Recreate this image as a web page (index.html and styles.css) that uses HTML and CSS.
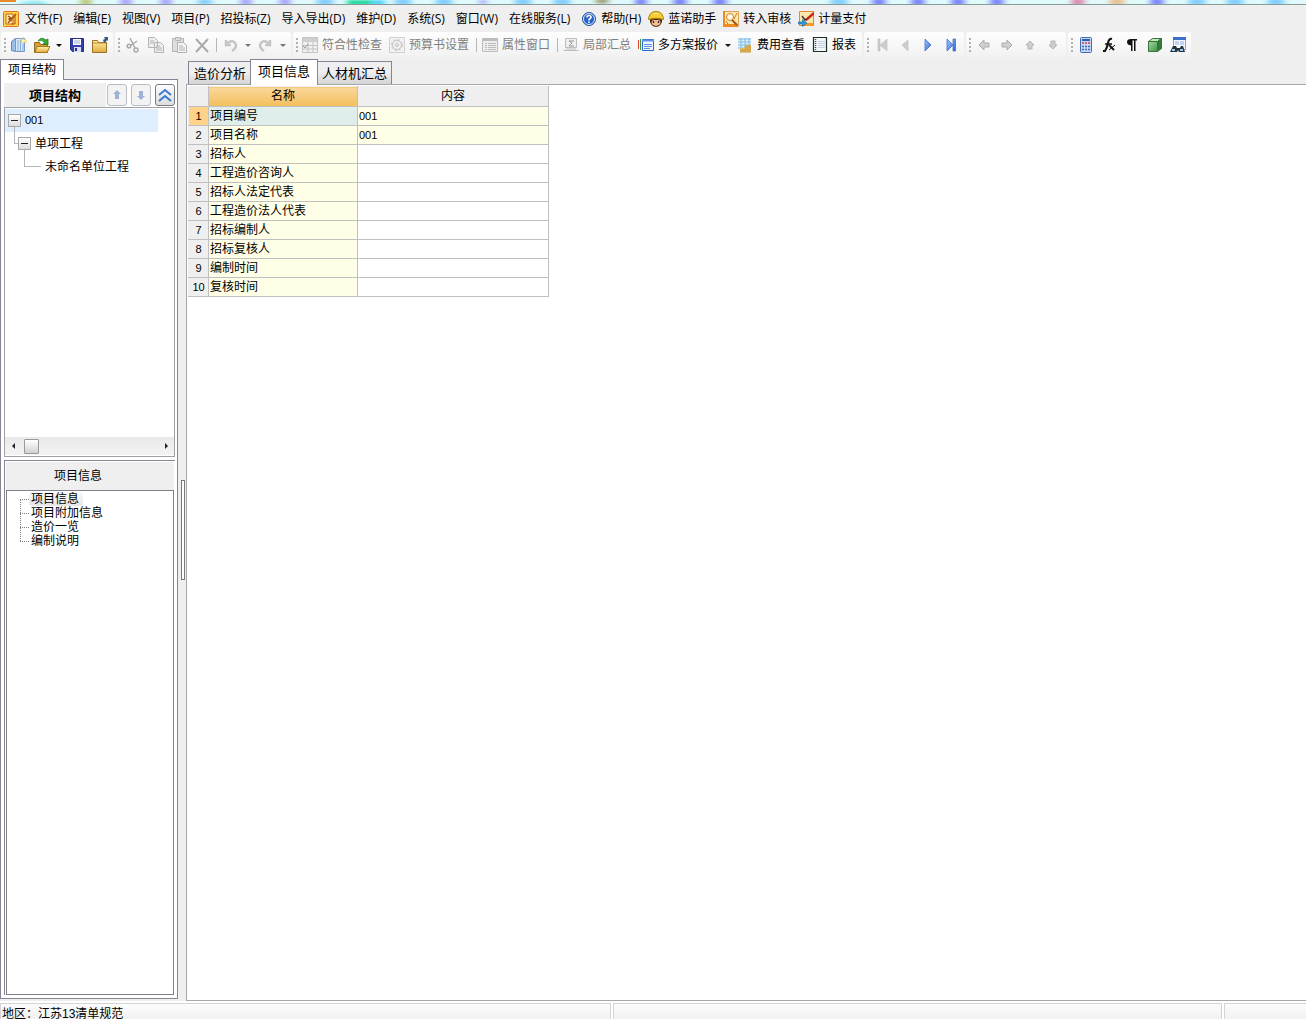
FILE: index.html
```html
<!DOCTYPE html>
<html lang="zh-CN">
<head>
<meta charset="utf-8">
<title>项目信息</title>
<link rel="stylesheet" href="styles.css">
</head>
<body>
<svg class="defs" aria-hidden="true">
  <defs>
    <linearGradient id="gold" x1="0" y1="0" x2="0" y2="1"><stop offset="0" stop-color="#fff3a8"/><stop offset="1" stop-color="#e0a93c"/></linearGradient>
    <linearGradient id="blue" x1="0" y1="0" x2="1" y2="1"><stop offset="0" stop-color="#a9cbfa"/><stop offset="1" stop-color="#2a62cf"/></linearGradient>
    <linearGradient id="green" x1="0" y1="0" x2="1" y2="1"><stop offset="0" stop-color="#a4dba0"/><stop offset="1" stop-color="#3f9145"/></linearGradient>
    <filter id="soft" x="-50%" y="-50%" width="200%" height="200%"><feGaussianBlur stdDeviation="3 1"/></filter>
    <symbol id="arrow-left" viewBox="0 0 16 16"><path d="M3 8 8 3v3h5v4H8v3z" fill="#cfcfcf" stroke="#ababab"/></symbol>
    <symbol id="arrow-up" viewBox="0 0 16 16"><path d="M8 4 12 8H10v4H6V8H4z" fill="#cfcfcf" stroke="#b4b4b4"/></symbol>
  </defs>
</svg>

<div class="titlebar">
  <svg width="1306" height="5" aria-hidden="true">
    <g filter="url(#soft)">
      <g fill="#8ee9ee"><ellipse cx="34" cy="4" rx="14" ry="3"/></g>
      <g fill="#bccb7c"><ellipse cx="86" cy="2" rx="6" ry="4"/></g>
      <g fill="#a9a5fb"><ellipse cx="126" cy="2" rx="6" ry="4"/><ellipse cx="166" cy="2" rx="6" ry="4"/><ellipse cx="246" cy="2" rx="6" ry="4"/><ellipse cx="285" cy="2" rx="6" ry="4"/><ellipse cx="483" cy="2" rx="4" ry="2"/></g>
      <g fill="#86d0fb"><ellipse cx="205" cy="2" rx="8" ry="3"/><ellipse cx="325" cy="2" rx="9" ry="4"/><ellipse cx="403" cy="2" rx="9" ry="4"/><ellipse cx="444" cy="2" rx="9" ry="4"/><ellipse cx="523" cy="2" rx="9" ry="4"/><ellipse cx="562" cy="2" rx="9" ry="4"/><ellipse cx="839" cy="2" rx="9" ry="4"/><ellipse cx="1197" cy="2" rx="9" ry="4"/><ellipse cx="1235" cy="2" rx="9" ry="4"/><ellipse cx="1276" cy="2" rx="9" ry="4"/></g>
      <path d="M347 0h24v5h-24z" fill="#28dca0"/><path d="M371 0h14v5h-14z" fill="#55d6f8"/>
      <g fill="#a2a47c"><ellipse cx="602" cy="1" rx="7" ry="3"/></g>
      <g fill="#7d84fb"><ellipse cx="641" cy="2" rx="6" ry="4"/><ellipse cx="680" cy="2" rx="7" ry="4"/><ellipse cx="720" cy="2" rx="7" ry="4"/><ellipse cx="879" cy="2" rx="7" ry="4"/><ellipse cx="918" cy="2" rx="7" ry="4"/><ellipse cx="958" cy="2" rx="7" ry="4"/><ellipse cx="997" cy="2" rx="7" ry="4"/><ellipse cx="1157" cy="2" rx="7" ry="4"/></g>
      <ellipse cx="1078" cy="2" rx="7" ry="4" fill="#dd8fb4"/><ellipse cx="1117" cy="2" rx="8" ry="4" fill="#eac294"/>
    </g>
    <path d="M0 0h16v2H0z" fill="#e78a2c"/>
  </svg>
</div>

<nav class="menubar" aria-label="菜单">
  <svg class="icon" viewBox="0 0 16 16" aria-hidden="true"><rect x=".5" y=".5" width="15" height="15" rx="1" fill="#ffd14d" stroke="#d9771c"/><path d="M3 3h7v10H3z" fill="#fff0b8" stroke="#c8690f"/><path d="M5 5l3 2-2 1 3 2M5 12 13 3" stroke="#a85410" stroke-width="1.5" fill="none"/><path d="M12 5v8H8" stroke="#a85410" fill="none"/></svg>
  <button>文件(F)</button><button>编辑(E)</button><button>视图(V)</button><button>项目(P)</button><button>招投标(Z)</button><button>导入导出(D)</button><button>维护(D)</button><button>系统(S)</button><button>窗口(W)</button><button>在线服务(L)</button>
  <button class="with-icon"><svg class="icon" viewBox="0 0 16 16"><circle cx="8" cy="8" r="6.5" fill="#2462c9" stroke="#2a5299"/><circle cx="8" cy="8" r="5.5" fill="none" stroke="#dceaff"/><path d="M6 6.500q0-2 2-2t2 1.800q0 1.200-2 2.200v1" fill="none" stroke="#fff" stroke-width="1.600"/><path d="M7.200 10.500h1.600v1.500H7.200z" fill="#fff"/></svg>帮助(H)</button>
  <button class="with-icon"><svg class="icon" viewBox="0 0 16 16"><path d="M3 8h10v4q-1 3.500-5 3.500t-5-3.500z" fill="#f2b98c" stroke="#4c2b14"/><path d="M2 7v5l3-3h6l3 3V7z" fill="#4c2b14"/><path d="M.5 8.500Q1 .500 8 .500t7.500 8Q8 6 .5 8.500z" fill="#f5cd35" stroke="#a98210"/><path d="M6 3q2-1 4 0" stroke="#fff2a0" fill="none"/><path d="M5.500 10v2m5-2v2" stroke="#222" stroke-width="1.200"/></svg>蓝诺助手</button>
  <button class="with-icon"><svg class="icon" viewBox="0 0 16 16"><path d="M.5.500h15v15H.500z" fill="#ffe8a9" stroke="#dfa25c"/><path d="M0 0h2v16H0zM1 13h14v3H1z" fill="#ee8c22"/><circle cx="7" cy="6" r="3.500" fill="#fffbe9" stroke="#c77c2a"/><path d="m9 9 5 5" stroke="#9e5517" stroke-width="2"/><path d="M14 2 11 8M3 10l2 3" stroke="#d47427"/></svg>转入审核</button>
  <button class="with-icon"><svg class="icon" viewBox="0 0 16 16"><path d="M1.500.500h14v14h-14z" fill="#ffe6ae" stroke="#dc8a38"/><path d="M7 12h8v3H7z" fill="#f19a27"/><path d="M16 2 8 9" stroke="#c92d18" stroke-width="2.500"/><path d="m4 5 3 4 2-1" stroke="#4b302a" stroke-width="1.500" fill="none"/><path d="M.5 11h4V8.500L9 12l-4.500 3.500V13H.500z" fill="#2a9be4" stroke="#1266a9" stroke-width=".6"/></svg>计量支付</button>
</nav>

<div class="toolbars" role="toolbar" aria-label="工具栏">
  <div class="group">
    <button aria-label="新建"><svg class="icon" viewBox="0 0 16 16"><path d="m.5 4.500 4-3v13l-4-1z" fill="#9bbfe6" stroke="#5f87bb"/><path d="M4.500 1.500h9v13h-9z" fill="#d7e9fb" stroke="#7799c5"/><path d="M7 3v11M9.500 3v11M12 7v7" stroke="#7fabdc"/><path d="M12.500 0v8M8.500 4h8M10 1.500l5 5m0-5-5 5" stroke="#f3c63b"/><circle cx="12.500" cy="4" r="1.500" fill="#fff6c0"/></svg></button>
    <button aria-label="打开"><svg class="icon" viewBox="0 0 16 16"><path d="M.5 5.500h5l1 2h7v8H.500z" fill="#d6a138" stroke="#94681b"/><path d="M3 9.500h13l-3 6H1z" fill="url(#gold)" stroke="#a47720"/><path d="M4 4Q7-1 12 3l2-1v6l-5-1 1.500-1.500Q8 2 4 4z" fill="#39a935" stroke="#157a20" stroke-width=".7"/></svg></button>
    <button class="drop" aria-label="打开选项"></button>
    <button aria-label="保存"><svg class="icon" viewBox="0 0 16 16"><path d="M1.500 1.500h13v13h-11l-2-2z" fill="#3540ad" stroke="#252e83"/><path d="M4 2h8v6H4z" fill="#fff"/><path d="M5 4h6M5 6h6" stroke="#9daed2"/><path d="M5 10h7v5H5z" fill="#dce0ee"/><path d="M6 11h2v3H6z" fill="#252e83"/></svg></button>
    <button aria-label="文件夹"><svg class="icon" viewBox="0 0 16 16"><path d="M.5 3.500h5l1 2h8v10H.500z" fill="url(#gold)" stroke="#9b7229"/><path d="M1 6h13" stroke="#b78b35"/><path d="M11 4q0-2 2-2l-1-2h4v4l-1-1-2 3z" fill="#3c597d"/></svg></button>
  </div>
  <div class="group muted">
    <button aria-label="剪切"><svg class="icon" viewBox="0 0 16 16" fill="none" stroke="#aaa" stroke-width="1.500"><path d="m5 1 5 10M12 4 5 9"/><circle cx="4" cy="9" r="1.800"/><circle cx="11" cy="13" r="2"/></svg></button>
    <button aria-label="复制"><svg class="icon" viewBox="0 0 16 16" fill="#eee" stroke="#b5b5b5"><path d="M.500.500h6l3 3v7h-9zM6.500 5.500h6l3 3v7h-9z"/><path d="M2 4h4M2 6h4M8 9h4m-4 2h6m-6 2h6"/></svg></button>
    <button aria-label="粘贴"><svg class="icon" viewBox="0 0 16 16" fill="#ddd" stroke="#b3b3b3"><path d="M1.500 1.500h11v13h-11z"/><path d="M4.500.500h5v3h-5z"/><path d="M6.500 5.500h6l3 3v7h-9z" fill="#f3f3f3"/><path d="M8 9h4m-4 2h6m-6 2h6"/></svg></button>
    <button aria-label="删除"><svg class="icon" viewBox="0 0 16 16" fill="none" stroke="#aaa" stroke-width="2"><path d="m2 2 12 13M14 2 2 15"/></svg></button>
    <span class="sep"></span>
    <button aria-label="撤销"><svg class="icon" viewBox="0 0 16 16" fill="none" stroke="#c5c5c5" stroke-width="2.500"><path d="M3 7q6-5 9-1t-3 8"/><path d="M3 3v5h5"/></svg></button>
    <button class="drop" aria-label="撤销选项"></button>
    <button aria-label="重做"><svg class="icon" viewBox="0 0 16 16" fill="none" stroke="#c5c5c5" stroke-width="2.500"><path d="M12 7q-6-5-9-1t3 8"/><path d="M12 3v5H7"/></svg></button>
    <button class="drop" aria-label="重做选项"></button>
  </div>
  <div class="group spaced">
    <button class="muted"><svg class="icon" viewBox="0 0 16 16" stroke="#c3c3c3"><path d="M.5.500h15v15H.500z" fill="#f2f2f2"/><path d="M1 1h14v4H1z" fill="#cfcfcf" stroke="none"/><path d="M1 8.500h14M1 12h14M6 5v10m5-10v10"/><path d="m1 9 2 2 3-4" stroke="#999" fill="none"/></svg>符合性检查</button>
    <button class="muted"><svg class="icon" viewBox="0 0 16 16" stroke="#c2c2c2" fill="none"><path d="M.5.500h15v15H.500z" fill="#f2f2f2" stroke="#d0d0d0"/><circle cx="8" cy="8" r="5.500" stroke-dasharray="2.300 2"/><circle cx="8" cy="8" r="4.500"/><circle cx="8" cy="8" r="1.500"/></svg>预算书设置</button>
    <span class="sep"></span>
    <button class="muted"><svg class="icon" viewBox="0 0 16 16" stroke="#bcbcbc" fill="none"><path d="M.5 1.500h15v13H.500z" fill="#eee"/><path d="M1 3h14" stroke-width="2"/><path d="M3 6.500h2m1 0h8m-11 2h2m1 0h8m-11 2h2m1 0h8m-11 2h2m1 0h8"/></svg>属性窗口</button>
    <span class="sep"></span>
    <button class="muted"><svg class="icon" viewBox="0 0 16 16" stroke="#bdbdbd" fill="none"><path d="M2.500 1.500h11v9h-11z" fill="#eee"/><path d="M.5 13.500h15M3 12h10"/><path d="M11 4H6l3 2-3 3h5" stroke="#999"/></svg>局部汇总</button>
    <button><svg class="icon" viewBox="0 0 16 16" fill="none"><path d="M.5 3v9" stroke="#d9432f"/><path d="M2.500 2v11" stroke="#3a9a45"/><path d="M4.500 2.500h11v11h-11z" fill="#edf5ff" stroke="#2a67cc"/><path d="M4 3.500h12" stroke="#5d92e6" stroke-width="2"/><path d="M6 7.500h8M6 9.500h8m-8 2h6" stroke="#5e91dc"/></svg>多方案报价</button>
    <button class="drop" aria-label="多方案报价选项"></button>
    <button><svg class="icon" viewBox="0 0 16 16" fill="none"><path d="M1 1h13v11H1z" fill="#d9effb"/><path d="M1 2h13M1 5h13M1 8h13M1 11h12M4 1v11m4-11v11m4-11v11" stroke="#85bce1"/><path d="M8 8h6v7H8zM3 11h6v4H3z" fill="#e8bd5b"/><path d="M8 9h6m-6 2h6m-6 2h6m-11 0h6m-6 2h11" stroke="#c29542"/></svg>费用查看</button>
    <button><svg class="icon" viewBox="0 0 16 16" fill="none"><path d="M1.500.500h13v14h-13z" fill="#f3f8ff" stroke="#17331f" stroke-width="1.200"/><path d="M3.500 2v12" stroke="#444" stroke-dasharray="1 1" stroke-width="1.500"/><path d="M6 4.500h7M6 6.500h7M6 8.500h7m-7 2h7" stroke="#c5cedd"/></svg>报表</button>
  </div>
  <div class="group">
    <button aria-label="首条"><svg class="icon" viewBox="0 0 16 16"><path d="M4 2v12H6V2zM13 2v12L6 8z" fill="#ccc" stroke="#bdbdbd" stroke-width=".6"/></svg></button>
    <button aria-label="上一条"><svg class="icon" viewBox="0 0 16 16"><path d="M11 3v11L5 8z" fill="#ccc" stroke="#bdbdbd" stroke-width=".6"/></svg></button>
    <button aria-label="下一条"><svg class="icon" viewBox="0 0 16 16"><path d="M5 2v12l6-6z" fill="url(#blue)" stroke="#3c72d3" stroke-width=".8"/></svg></button>
    <button aria-label="末条"><svg class="icon" viewBox="0 0 16 16"><path d="M4 2v12l6-6zM10 2h2.500v12H10z" fill="url(#blue)" stroke="#3c72d3" stroke-width=".8"/></svg></button>
  </div>
  <div class="group">
    <button aria-label="左移"><svg class="icon"><use href="#arrow-left"/></svg></button>
    <button aria-label="右移"><svg class="icon flip"><use href="#arrow-left"/></svg></button>
    <button aria-label="上移"><svg class="icon"><use href="#arrow-up"/></svg></button>
    <button aria-label="下移"><svg class="icon turn"><use href="#arrow-up"/></svg></button>
  </div>
  <div class="group">
    <button aria-label="计算器"><svg class="icon" viewBox="0 0 16 16"><rect x="2.500" y=".5" width="11" height="15" rx="1" fill="#c4d8f6" stroke="#426bac"/><path d="M4 2h8v2H4z" fill="#315fae"/><path d="M4 6h2m1 0h2m1 0h2" stroke="#d2404a" stroke-width="1.500"/><path d="M4 9.500h2m1 0h2m1 0h2m-8 3h2m1 0h2m1 0h2" stroke="#416dba" stroke-width="1.500"/></svg></button>
    <button aria-label="公式"><svg class="icon" viewBox="0 0 16 16" fill="none" stroke="#111"><path d="M11 2Q8 1 7 6t-3 8H2" stroke-width="2"/><path d="M4 7h7" stroke-width="1.500"/><path d="m8 8 5 5" stroke-width="2"/><path d="m14 8-6 5"/></svg></button>
    <button aria-label="段落"><svg class="icon" viewBox="0 0 16 16"><path d="M13 2H7Q3 2 3 5t4 3.500V14h1.500V3.500H10V14h1.500V3.500H13z" fill="#111"/></svg></button>
    <button aria-label="模型"><svg class="icon" viewBox="0 0 16 16" stroke="#35743a"><path d="M1.500 4.500h9v10h-9z" fill="url(#green)"/><path d="m1.500 4.500 4-3h9l-4 3z" fill="#c2e8b9"/><path d="m10.500 4.500 4-3v10l-4 3z" fill="#34783a"/></svg></button>
    <button aria-label="查找"><svg class="icon" viewBox="0 0 16 16"><path d="M3.500.500h12v12h-12z" fill="#f1f6ff" stroke="#85a3d2"/><path d="M3 1.500h13" stroke="#3d70c9" stroke-width="3"/><path d="M5 5h4m1 0h4M5 7h4m1 0h4" stroke="#93b1dc"/><path d="M3 9h3l1 2h3l1-2h2l2 6H9l-1-2-1 2H0z" fill="#26313e"/><path d="M2 12h3v2H2zM10 12h3v2h-3z" fill="#9ad0ed"/></svg></button>
  </div>
</div>

<div class="workspace">
  <aside class="sidebar">
    <div class="tabs"><button class="side-tab">项目结构</button></div>
    <div class="side-body">
      <section class="structure">
        <header class="structure-head">
          <h2>项目结构</h2>
          <button class="square dim" aria-label="上移"><svg viewBox="0 0 16 16"><path d="m8 3 4 4h-2v5H6V7H4z" fill="#9fb3d6"/></svg></button>
          <button class="square dim" aria-label="下移"><svg viewBox="0 0 16 16"><path d="m8 13 4-4h-2V4H6v5H4z" fill="#9fb3d6"/></svg></button>
          <button class="square" aria-label="折叠"><svg viewBox="0 0 16 16" fill="none" stroke="#397bd0" stroke-width="2"><path d="m2 8 6-5 6 5M2 14l6-5 6 5"/></svg></button>
        </header>
        <div class="tree-box">
          <ul class="tree">
            <li class="selected"><span class="toggle"></span><span class="code">001</span></li>
            <li class="level2"><span class="elbow"></span><span class="toggle"></span>单项工程</li>
            <li class="level3"><span class="elbow long"></span>未命名单位工程</li>
          </ul>
          <div class="scrollbar"><span class="tri left"></span><span class="thumb"></span><span class="tri right"></span></div>
        </div>
      </section>
      <section class="info">
        <h2>项目信息</h2>
        <ul class="info-list">
          <li><span class="current">项目信息</span></li>
          <li><span>项目附加信息</span></li>
          <li><span>造价一览</span></li>
          <li><span>编制说明</span></li>
        </ul>
      </section>
    </div>
  </aside>
  <div class="splitter"><span></span></div>
  <main class="content">
    <div class="tabs main-tabs">
      <button>造价分析</button><button class="active">项目信息</button><button>人材机汇总</button>
    </div>
    <div class="sheet">
      <table>
        <colgroup><col class="c-num"><col class="c-name"><col class="c-value"></colgroup>
        <thead><tr><th></th><th class="picked">名称</th><th>内容</th></tr></thead>
        <tbody>
          <tr class="filled current-row"><th>1</th><td>项目编号</td><td>001</td></tr>
          <tr class="filled"><th>2</th><td>项目名称</td><td>001</td></tr>
          <tr><th>3</th><td>招标人</td><td></td></tr>
          <tr><th>4</th><td>工程造价咨询人</td><td></td></tr>
          <tr><th>5</th><td>招标人法定代表</td><td></td></tr>
          <tr><th>6</th><td>工程造价法人代表</td><td></td></tr>
          <tr><th>7</th><td>招标编制人</td><td></td></tr>
          <tr><th>8</th><td>招标复核人</td><td></td></tr>
          <tr><th>9</th><td>编制时间</td><td></td></tr>
          <tr><th>10</th><td>复核时间</td><td></td></tr>
        </tbody>
      </table>
    </div>
  </main>
</div>

<footer class="status"><span class="region">地区：江苏13清单规范</span><span class="middle"></span><span class="end"></span></footer>
</body>
</html>
```
FILE: styles.css
```css
* { box-sizing: border-box; }
body {
  margin: 0;
  height: 100vh;
  display: flex;
  flex-direction: column;
  overflow: hidden;
  background: #efefef;
  color: #000;
  font: 12px/16px "Open Sans", "Noto Sans CJK SC", sans-serif;
}
button {
  margin: 0;
  padding: 0;
  border: 0;
  background: none;
  color: inherit;
  font: inherit;
  white-space: nowrap;
}
h2 { margin: 0; font-size: 12px; font-weight: normal; }
ul { margin: 0; padding: 0; list-style: none; }
svg { display: block; flex: none; }
.defs { position: absolute; width: 0; height: 0; }
.icon { width: 16px; height: 16px; }
.flip { transform: scaleX(-1); }
.turn { transform: scaleY(-1); }

.titlebar {
  flex: none;
  height: 5px;
  overflow: hidden;
  background: #e0fafc;
  border-bottom: 1px solid #87999b;
}

.menubar {
  flex: none;
  display: flex;
  align-items: center;
  gap: 11px;
  height: 27px;
  padding-left: 3px;
}
.menubar > .icon { margin-right: -5px; }
.with-icon { display: flex; align-items: center; gap: 4px; }
.with-icon + .with-icon { margin-left: -4px; }

.toolbars { flex: none; display: flex; gap: 2px; height: 26px; padding-left: 1px; }
.group {
  display: flex;
  align-items: center;
  height: 26px;
  padding-right: 2px;
  border-radius: 3px;
  background: linear-gradient(#fefefe, #f1f1f1);
}
.group::before {
  content: "";
  width: 2px;
  height: 15px;
  margin: 0 1px 0 3px;
  background: repeating-linear-gradient(#b0b0b0 0 2px, transparent 2px 4px);
}
.group button {
  display: flex;
  align-items: center;
  justify-content: center;
  gap: 4px;
  min-width: 23px;
  height: 23px;
  padding: 0 3px;
}
.spaced button:not(.drop) { margin-right: 1px; }
.muted { color: #808080; }
.group .drop { min-width: 12px; padding: 0; }
.drop::after {
  content: "";
  border: 3px solid transparent;
  border-top-color: #111;
  border-bottom: 0;
}
.muted .drop::after { border-top-color: #777; }
.sep { width: 1px; height: 14px; margin: 0 2px 0 3px; background: #b5b5b5; }

.workspace { flex: 1; min-height: 0; display: flex; padding-top: 1px; }
.sidebar { width: 178px; flex: none; display: flex; flex-direction: column; padding-bottom: 2px; }
.tabs { flex: none; display: flex; position: relative; z-index: 1; }
.side-tab {
  height: 21px;
  margin-bottom: -1px;
  padding: 0 7px;
  border: 1px solid #858595;
  border-bottom: 0;
  background: #fff;
}
.side-body {
  flex: 1;
  min-height: 0;
  display: flex;
  flex-direction: column;
  gap: 3px;
  padding: 3px 2px 3px 3px;
  border: 1px solid #858595;
  background: #fff;
}
.structure { height: 374px; flex: none; display: flex; flex-direction: column; }
.structure-head { display: flex; gap: 4px; height: 24px; align-items: center; }
.structure-head h2 {
  flex: 1;
  height: 24px;
  line-height: 24px;
  font-size: 13px;
  font-weight: bold;
  text-align: center;
  background: #efefef;
  margin-right: -3px;
}
.square {
  display: grid;
  place-items: center;
  width: 20px;
  height: 22px;
  border: 1px solid #777b84;
  border-radius: 3px;
  background: linear-gradient(#fcfcfc, #dedede);
}
.square svg { width: 16px; height: 16px; }
.dim { border-color: #b8bcc4; background: #f3f3f3; }
.tree-box {
  flex: 1;
  display: flex;
  flex-direction: column;
  border: 1px solid #a0a0a8;
  line-height: 23px;
}
.tree { flex: 1; padding-top: 1px; }
.tree li { position: relative; display: flex; align-items: center; gap: 4px; height: 23px; padding-left: 3px; }
.tree .selected { width: 153px; background: #dfeefe; }
.tree .level2 { padding-left: 13px; }
.tree .level3 { padding-left: 40px; }
.code { font-family: "Liberation Sans", sans-serif; font-size: 11px; }
.toggle {
  width: 13px;
  height: 13px;
  border: 1px solid #a8a8a8;
  background: linear-gradient(#222, #222) center / 7px 1px no-repeat, linear-gradient(#fff, #ddd);
}
.elbow {
  position: absolute;
  left: 9px;
  top: -5px;
  width: 4px;
  height: 17px;
  border: solid #b5b5b5;
  border-width: 0 0 1px 1px;
}
.elbow.long { left: 19px; width: 17px; }
.scrollbar {
  display: flex;
  align-items: center;
  height: 18px;
  margin-bottom: 1px;
  padding: 0 6px 0 7px;
  background: linear-gradient(#e9e9e9, #f3f3f3);
}
.tri { border: 3px solid transparent; }
.tri.left { border-left: 0; border-right-color: #222; }
.tri.right { border-right: 0; border-left-color: #222; margin-left: auto; }
.thumb {
  width: 15px;
  height: 15px;
  margin-left: 9px;
  border: 1px solid #999;
  border-radius: 1px;
  background: linear-gradient(#fff, #d2d2d6);
}

.info {
  flex: 1;
  min-height: 0;
  display: flex;
  flex-direction: column;
  padding: 1px 1px 0 1px;
  border: solid #858595;
  border-width: 1px 0 0 1px;
}
.info h2 { height: 28px; padding-right: 24px; line-height: 28px; text-align: center; background: #efefef; }
.info-list { flex: 1; padding-top: 1px; border: 1px solid #80808c; font-size: 12px; line-height: 14px; }
.info-list li {
  position: relative;
  display: flex;
  align-items: center;
  height: 14px;
  padding-left: 13px;
}
.info-list li::before { content: ""; width: 9px; border-top: 1px dotted #808080; }
.info-list li + li::after {
  content: "";
  position: absolute;
  left: 13px;
  top: -7px;
  height: 14px;
  border-left: 1px dotted #808080;
}
.info-list span { padding: 0 4px 0 2px; }
.info-list .current { border-radius: 3px; background: linear-gradient(#fafafa, #e6e6e6); }

.splitter { width: 8px; flex: none; display: flex; align-items: center; justify-content: flex-end; padding-right: 1px; }
.splitter span { width: 4px; height: 100px; border: 1px solid #777; background: #fff; }

.content { flex: 1; min-width: 0; display: flex; flex-direction: column; }
.main-tabs { height: 25px; align-items: flex-end; padding-left: 2px; font-size: 13px; }
.main-tabs button {
  height: 23px;
  padding: 0 4px 0 5px;
  border: 1px solid #858595;
  border-bottom: 0;
  background: linear-gradient(#efefef 45%, #d4d4d4);
}
.main-tabs button + button { border-left: 0; padding: 0 4px; }
.main-tabs .active {
  height: 26px;
  margin-bottom: -1px;
  padding: 0 7px 3px;
  background: #fff;
}
.main-tabs button + .active { border-left: 1px solid #858595; margin-left: -1px; padding: 0 7px 3px; }
.sheet {
  flex: 1;
  padding: 1px 0 0 1px;
  border: 1px solid #a7a7ae;
  border-right: 0;
  background: #fff;
}
table {
  width: 361px;
  table-layout: fixed;
  border-collapse: collapse;
  font: 12px/18px "Liberation Sans", "Noto Sans CJK SC", sans-serif;
}
.c-num { width: 20px; }
.c-name { width: 149px; }
th, td {
  height: 19px;
  padding: 0 1px;
  border: 1px solid #c0c0c0;
  font-weight: normal;
  text-align: left;
  line-height: 18px;
  white-space: nowrap;
}
tr > :first-child { border-left-color: #efefef; }
thead th { height: 20px; border-top-color: #efefef; line-height: 19px; }
th { background: #efefef; text-align: center; padding: 0; }
tbody th, td:last-child { font-size: 11px; }
thead .picked { background: linear-gradient(#fbd79c, #f2bf5c); }
td:nth-child(2), .filled td { background: #fffee6; }
.current-row td:nth-child(2) { background: #dfeeeb; }
.current-row th { background: #ffd28a; }

.status {
  flex: none;
  display: flex;
  gap: 2px;
  height: 18px;
  padding-top: 2px;
  overflow: hidden;
  background: #fff;
  font: 12px/20px "Liberation Sans", "Noto Sans CJK SC", sans-serif;
}
.status span {
  height: 20px;
  border: solid #d4d4d4;
  border-width: 1px 1px 0;
  background: linear-gradient(#fcfcfc, #eee);
}
.status .region { flex: 610; padding-left: 1px; }
.status .middle { flex: 610; }
.status .end { flex: none; width: 82px; border-right: 0; }
```
